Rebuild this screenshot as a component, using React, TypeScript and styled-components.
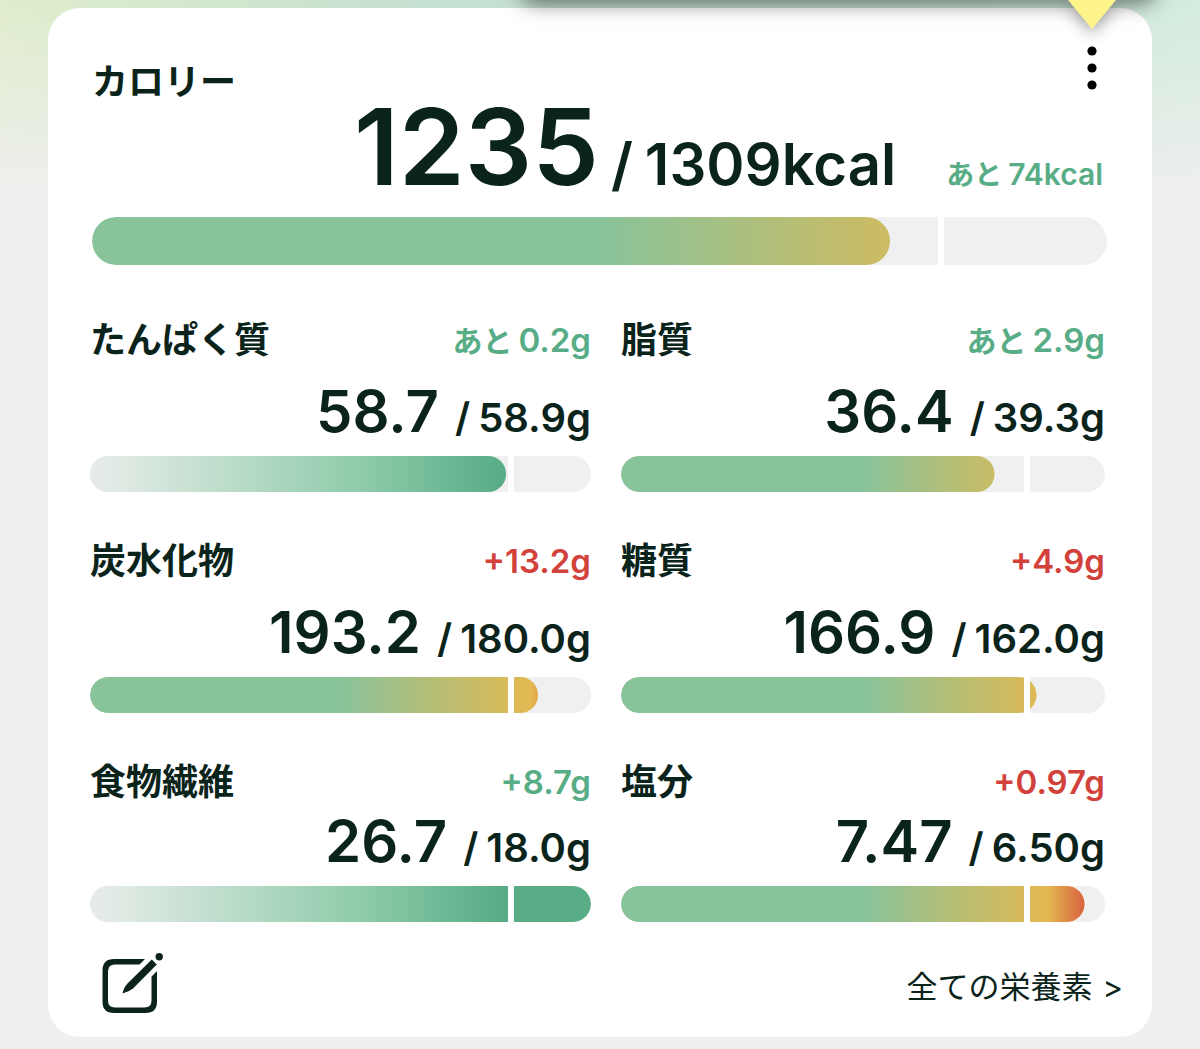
import React from 'react'
import styled, { createGlobalStyle } from 'styled-components'

type Tone = 'good' | 'over'
type Palette = 'limit' | 'fill'

interface INutrient {
  name: string
  value: string
  target: string
  unit: string
  prefix?: string
  diff: string
  tone: Tone
  palette: Palette
  compact?: boolean
}

// the target sits at 100%, the track runs on to 120%
const TRACK_SCALE = 1.2

const TONES: Record<Tone, string> = {
  good: '#58ad87',
  over: '#d2423a',
}

const GRADIENTS: Record<Palette, string> = {
  limit: 'linear-gradient(90deg, #89c39a 0%, #89c39a 50%, #e3b951 88%, #d9603d 96%)',
  fill: 'linear-gradient(90deg, #e6ebe8 0%, #e0eae4 6%, #8fcbaa 54%, #58ad87 82%)',
}

const nutrients: INutrient[] = [
  { name: 'たんぱく質', value: '58.7', target: '58.9', unit: 'g', prefix: 'あと', diff: '0.2g', tone: 'good', palette: 'fill' },
  { name: '脂質', value: '36.4', target: '39.3', unit: 'g', prefix: 'あと', diff: '2.9g', tone: 'good', palette: 'limit' },
  { name: '炭水化物', value: '193.2', target: '180.0', unit: 'g', diff: '+13.2g', tone: 'over', palette: 'limit' },
  { name: '糖質', value: '166.9', target: '162.0', unit: 'g', diff: '+4.9g', tone: 'over', palette: 'limit' },
  { name: '食物繊維', value: '26.7', target: '18.0', unit: 'g', diff: '+8.7g', tone: 'good', palette: 'fill', compact: true },
  { name: '塩分', value: '7.47', target: '6.50', unit: 'g', diff: '+0.97g', tone: 'over', palette: 'limit', compact: true },
]

const GlobalStyle = createGlobalStyle`
  * {
    box-sizing: border-box;
  }
  body {
    margin: 0;
    background-color: #efefef;
    color: #0b241b;
    font-family: Inter, 'Noto Sans CJK JP', sans-serif;
  }
`
const Page = styled.main`
  position: relative;
  overflow: hidden;
  padding: 8px 48px 12px;
  background: linear-gradient(180deg, #efefef00 0, #efefef 200px),
    linear-gradient(90deg, #e0edcb 0%, #c4e0d0 35%, #c4e0d0 75%, #d3ecdd 100%);
`
const Tooltip = styled.div`
  position: absolute;
  z-index: 1;
  top: -40px;
  right: 44px;
  width: 53%;
  height: 40px;
  border-radius: 16px;
  box-shadow: 0 4px 20px #00000080;
`
const TooltipArrow = styled.svg`
  position: absolute;
  top: 40px;
  right: 40px;
  width: 48px;
  height: 29px;
  overflow: visible;
  filter: drop-shadow(0 4px 8px #00000066);
`
const Card = styled.section`
  padding: 36px 45px 23px 42px;
  border-radius: 32px;
  background-color: #ffffff;
`
const Summary = styled.div`
  padding-left: 2px;
`
const SummaryHeader = styled.header`
  display: flex;
  align-items: flex-end;
  justify-content: space-between;
  height: 60px;
`
const Title = styled.h2`
  margin: 0;
  padding-bottom: 6px;
  font-family: 'Noto Sans CJK JP', sans-serif;
  font-size: 36px;
  font-weight: 700;
  line-height: 38px;
`
const MenuButton = styled.button`
  display: flex;
  align-self: flex-start;
  justify-content: center;
  width: 30px;
  height: 48px;
  padding: 0;
  border: none;
  background: none;
  cursor: pointer;
`
const SummaryAmount = styled.div`
  display: flex;
  align-items: baseline;
  justify-content: flex-end;
  height: 86px;
  margin-bottom: 27px;
  padding-right: 4px;
  font-size: 58px;
  font-weight: 600;
  line-height: 86px;
`
const SummaryValue = styled.span`
  margin-right: 12px;
  font-size: 106px;
`
const SummaryTarget = styled.span`
  margin: 0 50px 0 12px;
`
const Diff = styled.span<{ $tone: Tone; $size: number }>`
  display: flex;
  align-items: baseline;
  gap: 6px;
  color: ${({ $tone }) => TONES[$tone]};
  font-size: ${({ $size }) => $size}px;
  font-weight: 600;
  line-height: 44px;
`
const DiffPrefix = styled.span<{ $size: number }>`
  font-size: ${({ $size }) => $size}px;
`
const Track = styled.div<{ $height: number }>`
  position: relative;
  height: ${({ $height }) => $height}px;
  overflow: hidden;
  border-radius: 24px;
  background-color: #f0f0f0;
`
const TrackFill = styled.div<{ $palette: Palette }>`
  height: 100%;
  background: ${({ $palette }) => GRADIENTS[$palette]};
`
const TrackMark = styled.span`
  position: absolute;
  top: 0;
  bottom: 0;
  left: calc(100% / ${TRACK_SCALE});
  width: 6px;
  background-color: #ffffff;
`
const NutrientGrid = styled.div`
  display: grid;
  grid-template-columns: 501fr 484fr;
  gap: 47px 30px;
  margin-top: 53px;
  padding-right: 2px;
`
const NutrientHeader = styled.div`
  display: flex;
  align-items: center;
  justify-content: space-between;
  height: 44px;
`
const NutrientAmount = styled.div<{ $compact?: boolean }>`
  display: flex;
  align-items: baseline;
  justify-content: flex-end;
  height: 62px;
  margin: ${({ $compact }) => ($compact ? 6 : 18)}px 0 14px;
  font-size: 40px;
  font-weight: 600;
  line-height: 62px;
`
const NutrientValue = styled.span`
  margin-right: 16px;
  font-size: 58px;
`
const NutrientTarget = styled.span`
  margin-left: 8px;
`
const Footer = styled.footer`
  display: flex;
  align-items: center;
  justify-content: space-between;
  margin-top: 32px;
`
const EditButton = styled.button`
  display: flex;
  margin-left: 12px;
  padding: 0;
  border: none;
  background: none;
  color: inherit;
  cursor: pointer;
`
const EditIcon = styled.svg`
  overflow: visible;
  fill: currentColor;
`
const AllLink = styled.a`
  display: flex;
  gap: 10px;
  margin-right: -16px;
  padding-top: 6px;
  color: inherit;
  font-size: 31px;
  line-height: 44px;
  text-decoration: none;
`

interface IBar {
  label: string
  value: string
  target: string
  palette: Palette
  height: number
}

const Bar = ({ label, value, target, palette, height }: IBar) => {
  const percent = Math.min(100, ((+value / +target) * 100) / TRACK_SCALE)
  return (
    <Track
      $height={height}
      role="meter"
      aria-label={label}
      aria-valuemin={0}
      aria-valuemax={+target * TRACK_SCALE}
      aria-valuenow={+value}
    >
      <TrackFill $palette={palette} style={{ clipPath: `inset(0 ${100 - percent}% 0 0 round 24px)` }} />
      <TrackMark />
    </Track>
  )
}

const Nutrient = ({ name, value, target, unit, prefix, diff, tone, palette, compact }: INutrient) => (
  <div>
    <NutrientHeader>
      <Title as="h3">{name}</Title>
      <Diff $tone={tone} $size={33}>
        {prefix && <DiffPrefix $size={30}>{prefix}</DiffPrefix>}
        <span>{diff}</span>
      </Diff>
    </NutrientHeader>
    <NutrientAmount $compact={compact}>
      <NutrientValue>{value}</NutrientValue>
      <span>/</span>
      <NutrientTarget>{`${target}${unit}`}</NutrientTarget>
    </NutrientAmount>
    <Bar label={name} value={value} target={target} palette={palette} height={36} />
  </div>
)

const App = () => (
  <>
    <GlobalStyle />
    <Page>
      <Tooltip>
        <TooltipArrow viewBox="0 0 48 29">
          <path d="M0 0H48L24 29Z" fill="#fdf58c" />
        </TooltipArrow>
      </Tooltip>
      <Card>
        <Summary>
          <SummaryHeader>
            <Title>カロリー</Title>
            <MenuButton type="button" aria-label="メニュー">
              <svg width="10" height="48" viewBox="0 0 10 48">
                <circle cx="5" cy="7" r="4.6" />
                <circle cx="5" cy="24" r="4.6" />
                <circle cx="5" cy="41" r="4.6" />
              </svg>
            </MenuButton>
          </SummaryHeader>
          <SummaryAmount>
            <SummaryValue>1235</SummaryValue>
            <span>/</span>
            <SummaryTarget>1309kcal</SummaryTarget>
            <Diff $tone="good" $size={30}>
              <DiffPrefix $size={28}>あと</DiffPrefix>
              <span>74kcal</span>
            </Diff>
          </SummaryAmount>
          <Bar label="カロリー" value="1235" target="1309" palette="limit" height={48} />
        </Summary>
        <NutrientGrid>
          {nutrients.map((nutrient) => (
            <Nutrient key={nutrient.name} {...nutrient} />
          ))}
        </NutrientGrid>
        <Footer>
          <EditButton type="button" aria-label="編集">
            <EditIcon width="62" height="60" viewBox="0 0 62 60">
              <path d="M43 5H12Q0.500 5 0.500 16.500V47.500Q0.500 59 12 59H43.500Q55 59 55 47.500V17L49.500 22.500V46.500Q49.500 53.500 42.500 53.500H13Q6 53.500 6 46.500V17.500Q6 10.500 13 10.500H37.500Z" />
              <path d="M49.800 5.500L54.800 10.500L31 34.400Q27 37.700 20.500 39.400Q22 33 25.500 29.500Z" />
              <circle cx="57.200" cy="2.800" r="3.700" />
            </EditIcon>
          </EditButton>
          <AllLink href="#nutrients">
            <span>全ての栄養素</span>
            <span>&gt;</span>
          </AllLink>
        </Footer>
      </Card>
    </Page>
  </>
)

export default App
